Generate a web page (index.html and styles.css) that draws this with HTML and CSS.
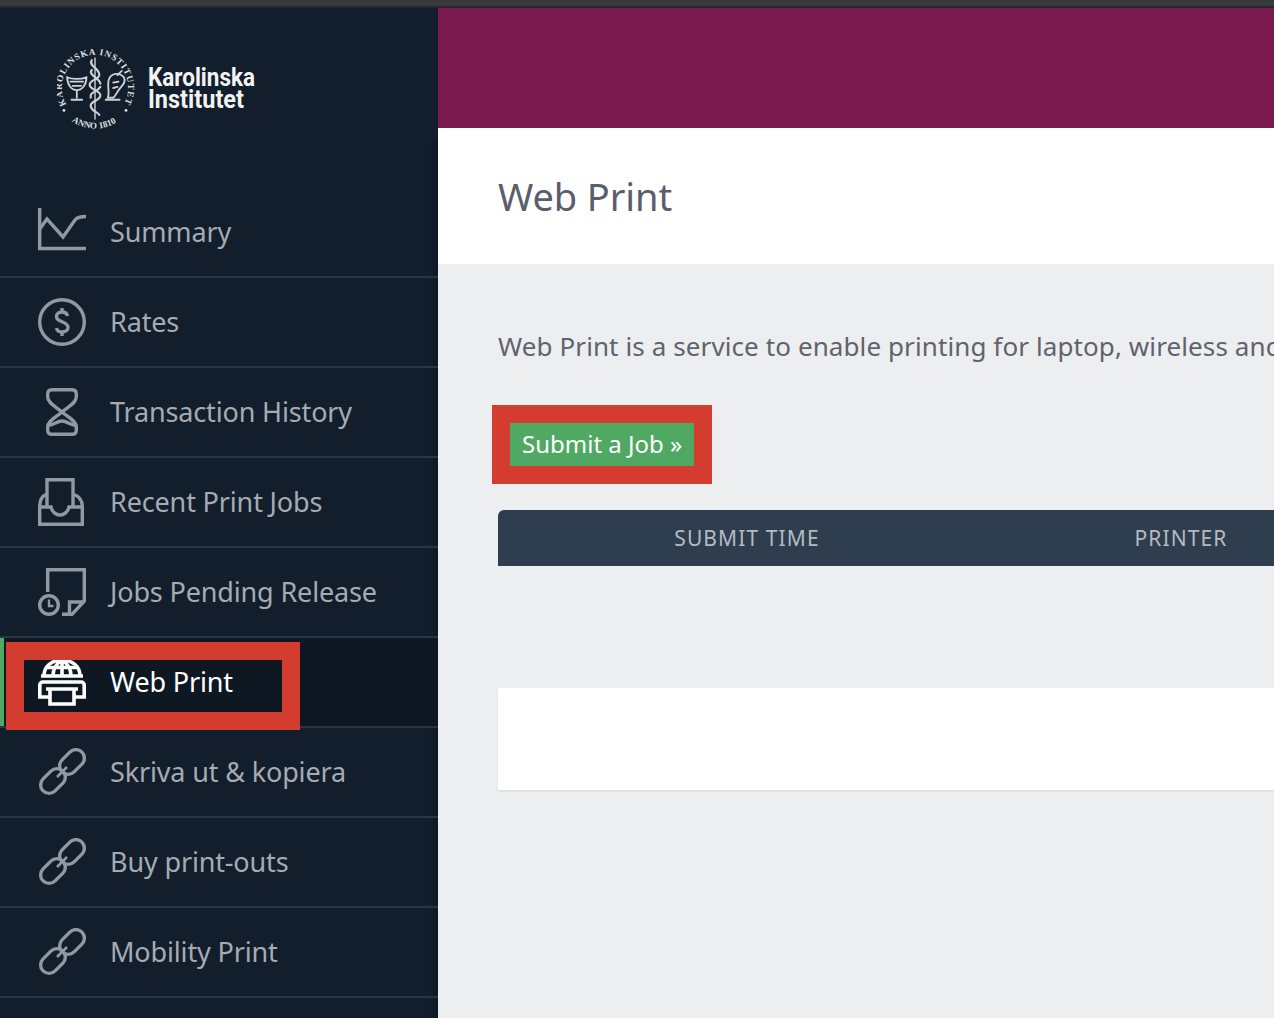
FILE: index.html
```html
<!DOCTYPE html>
<html lang="en">
<head>
    <meta charset="UTF-8">
    <title>Web Print</title>
    <link rel="stylesheet" href="styles.css">
</head>
<body>
    <svg class="defs" width="0" height="0">
        <symbol id="icon-link" viewBox="0 0 48 48">
            <g fill="none" stroke="currentColor" stroke-width="3.400">
                <rect x="20" y="5.500" width="28" height="17" rx="8.500" transform="rotate(-45 34 14)"/>
                <rect x="1" y="24.500" width="28" height="17" rx="8.500" transform="rotate(-45 15 33)"/>
                <path d="M19 29 L29 19" stroke-width="2.600"/>
            </g>
        </symbol>
    </svg>

    <div class="topbar"></div>

    <div class="app">
        <aside class="sidebar">
            <div class="logo">
                <svg width="210" height="90" viewBox="0 0 210 90">
                    <defs>
                        <path id="seal-top" d="M11.200 56.500 A31 31 0 1 1 64.800 56.500"/>
                        <path id="seal-bottom" d="M16.200 72.100 A38 38 0 0 0 59.800 72.100"/>
                    </defs>
                    <g transform="translate(38 41) scale(1.070) translate(-38 -41)">
                        <text class="seal-text"><textPath href="#seal-top" textLength="128">KAROLINSKA INSTITUTET</textPath></text>
                        <text class="seal-text"><textPath href="#seal-bottom" textLength="44">ANNO 1810</textPath></text>
                        <g fill="none" stroke="#cfd2d5" stroke-width="1.700" stroke-linecap="round">
                            <path d="M38 13 V70" stroke-width="1.300"/>
                            <path d="M35 15 C31 20 43 23 42 29 C41 34 33 33 33 38 C33 43 43 43 43 48 C43 53 33 53 34 58 C35 63 40 63 42 66" stroke-width="2"/>
                            <path d="M35 24 C31 29 43 32 43 37 M43 40 C39 46 33 44 34 50" stroke-width="2"/>
                            <path d="M12 31 C16 33 25 33 30 31 C30 38 26 43 21 43 C16 43 12 38 12 31 Z M21 43 V50 M16 52 H26"/>
                            <path d="M15 35 H27 M17 39 H25"/>
                            <path d="M50 50 C52 45 49 38 51 33 C53 27 61 26 65 31 C68 36 62 40 60 43 C58 46 57 49 55 50 Z M48 52 H61"/>
                            <path d="M59 29 L63 25 M55 36 L60 35 M55 41 L59 40"/>
                        </g>
                        <circle cx="9" cy="62" r="1.300" fill="#dfe1e3"/>
                        <circle cx="67" cy="62" r="1.300" fill="#dfe1e3"/>
                    </g>
                    <text class="logo-text" x="91" y="39" textLength="107" lengthAdjust="spacingAndGlyphs">Karolinska</text>
                    <text class="logo-text" x="91" y="61" textLength="96" lengthAdjust="spacingAndGlyphs">Institutet</text>
                </svg>
            </div>

            <nav class="menu">
                <a class="menu-item">
                    <svg class="icon" viewBox="0 0 48 48" fill="none" stroke="currentColor" stroke-width="3.400">
                        <path d="M1.700 0 V40.500 H48"/>
                        <path d="M1.700 21 L9 11 L25 29 L37 12 C39 9.500 43 8.500 48 8.500"/>
                    </svg>
                    <span>Summary</span>
                </a>
                <a class="menu-item">
                    <svg class="icon" viewBox="0 0 48 48" fill="none" stroke="currentColor" stroke-width="3.400">
                        <circle cx="24" cy="24" r="22.300"/>
                        <path d="M29.500 18 C29 15.500 26.500 14 24 14 C20.500 14 18.500 16 18.500 18.500 C18.500 25 30 22.500 30 29.500 C30 32 27.500 34 24 34 C21 34 19 32.500 18.500 30"/>
                        <path d="M24 10 V14 M24 34 V38"/>
                    </svg>
                    <span>Rates</span>
                </a>
                <a class="menu-item">
                    <svg class="icon" viewBox="0 0 48 48" fill="none" stroke="currentColor" stroke-width="3.400" stroke-linejoin="round">
                        <path d="M14 1.700 H34 C37.500 1.700 38.300 4 38.300 6 V9 C38.300 15 31 18 24 24 C17 30 9.700 33 9.700 39 V42 C9.700 44 10.500 46.300 14 46.300 H34 C37.500 46.300 38.300 44 38.300 42 V39 C38.300 33 31 30 24 24 C17 18 9.700 15 9.700 9 V6 C9.700 4 10.500 1.700 14 1.700 Z"/>
                        <path d="M9.700 37.500 C15 37.500 19 33 24 33 C29 33 33 37.500 38.300 37.500"/>
                    </svg>
                    <span>Transaction History</span>
                </a>
                <a class="menu-item">
                    <svg class="icon" viewBox="0 0 48 48" fill="none" stroke="currentColor" stroke-width="3.400">
                        <path d="M9 28 V1.700 H35 V28"/>
                        <path d="M9 16 C4 18 1.700 23 1.700 28 V46.300 H44.300 V28 C44.300 23 41 18 35 16"/>
                        <path d="M1.700 29 H13 C14 34 18 37 22 37 C26 37 30 34 31 29 H44.300"/>
                    </svg>
                    <span>Recent Print Jobs</span>
                </a>
                <a class="menu-item">
                    <svg class="icon" viewBox="0 0 48 48" fill="none" stroke="currentColor" stroke-width="3.400">
                        <path d="M9.700 24 V1.700 H46.300 V33 L34 46.300 H24"/>
                        <path d="M46.300 34 H31.500 V46"/>
                        <circle cx="11" cy="37" r="9.300"/>
                        <path d="M11 31.500 V38 H15.500" stroke-width="2.400"/>
                    </svg>
                    <span>Jobs Pending Release</span>
                </a>
                <a class="menu-item active">
                    <svg class="icon" viewBox="0 0 48 48" fill="none" stroke="currentColor" stroke-width="3.600">
                        <path d="M6 18 C6 8 14 2 24 2 C34 2 42 8 42 18"/>
                        <path d="M24 2 V18 M15 18 C15 11 19 5 24 2 C29 5 33 11 33 18 M9 9.500 H39 M3 18 H45"/>
                        <path d="M11 39 H1.800 V27 C1.800 25.500 3 24 5 24 H43 C45 24 46.200 25.500 46.200 27 V39 H37"/>
                        <path d="M8 31 H40 M12 31 V46 H36 V31"/>
                    </svg>
                    <span>Web Print</span>
                </a>
                <a class="menu-item">
                    <svg class="icon"><use href="#icon-link"/></svg>
                    <span>Skriva ut &amp; kopiera</span>
                </a>
                <a class="menu-item">
                    <svg class="icon"><use href="#icon-link"/></svg>
                    <span>Buy print-outs</span>
                </a>
                <a class="menu-item">
                    <svg class="icon"><use href="#icon-link"/></svg>
                    <span>Mobility Print</span>
                </a>
            </nav>
            <div class="callout callout-menu"></div>
        </aside>

        <main class="main">
            <div class="banner"></div>
            <header class="page-title">
                <h1>Web Print</h1>
            </header>
            <section class="content">
                <p class="intro">Web Print is a service to enable printing for laptop, wireless and unauthenticated desktop users without the need to install print drivers.</p>
                <div class="actions">
                    <a class="btn-submit">Submit a Job »</a>
                </div>
                <div class="job-head">
                    <div>SUBMIT TIME</div>
                    <div>PRINTER</div>
                </div>
                <div class="job-empty"></div>
            </section>
        </main>
    </div>
</body>
</html>
```

FILE: styles.css
```css
html, body {
    margin: 0;
    padding: 0;
    height: 100%;
    overflow: hidden;
}
body {
    font-family: 'Noto Sans', Arial, sans-serif;
    background-color: #edeef0;
}
.defs {
    display: block;
    height: 0;
}
.topbar {
    box-sizing: border-box;
    height: 8px;
    background-color: #3a3a3c;
    border-bottom: 2px solid #26272a;
}
.app {
    display: flex;
    height: 1010px;
}
.sidebar {
    position: relative;
    flex: 0 0 438px;
    background: linear-gradient(to left, rgba(0, 0, 0, 0.16), transparent) no-repeat 100% 130px / 10px 100%, #121e2b;
}
.logo {
    height: 180px;
    padding: 39px 0 0 57px;
    box-sizing: border-box;
}
.logo svg {
    display: block;
}
.seal-text {
    font-family: 'Liberation Serif', serif;
    font-size: 8.500px;
    font-weight: 700;
    fill: #dfe1e3;
}
.logo-text {
    font-family: 'Liberation Sans Narrow', 'Roboto', Arial, sans-serif;
    font-size: 26px;
    font-weight: 700;
    fill: #f2f3f4;
}
.menu-item {
    display: flex;
    align-items: center;
    gap: 24px;
    height: 88px;
    padding-left: 38px;
    border-bottom: 2px solid #2a3644;
    color: #a6abb2;
    font-size: 27px;
    letter-spacing: -0.15px;
}
.menu-item span {
    margin-bottom: 2px;
}
.menu-item .icon {
    color: #9298a0;
}
.menu-item.active {
    background-color: #0e1822;
    box-shadow: inset 4px 0 0 #4fa963;
    color: #fff;
}
.menu-item.active .icon {
    color: #fff;
}
.icon {
    flex: 0 0 48px;
    width: 48px;
    height: 48px;
}
.callout {
    position: absolute;
    box-sizing: border-box;
    border: 18px solid #d33c2f;
}
.callout-menu {
    left: 6px;
    top: 634px;
    width: 294px;
    height: 88px;
}
.main {
    flex: 1;
    min-width: 0;
    overflow: hidden;
}
.banner {
    height: 120px;
    background-color: #7b1a4f;
}
.page-title {
    display: flex;
    align-items: center;
    height: 136px;
    padding-left: 60px;
    background-color: #fff;
}
.page-title h1 {
    margin: 0;
    font-size: 38px;
    font-weight: 400;
    letter-spacing: -0.1px;
    color: #5a5e6b;
}
.content {
    padding: 64px 0 0 60px;
}
.intro {
    margin: 0;
    font-size: 26px;
    line-height: 36px;
    letter-spacing: 0.1px;
    color: #5f636e;
    white-space: nowrap;
}
.actions {
    display: inline-block;
    margin: 41px 0 26px -6px;
    border: 18px solid #d33c2f;
}
.btn-submit {
    display: block;
    padding: 0 12px 2px;
    line-height: 41px;
    background-color: #4fa963;
    color: #fff;
    font-size: 24px;
}
.job-head {
    display: grid;
    grid-template-columns: 498px 370px;
    width: 900px;
    height: 56px;
    align-items: center;
    text-align: center;
    background-color: #2e3e4f;
    border-radius: 6px 0 0 0;
    color: #b4bac3;
    font-size: 21px;
    letter-spacing: 1.100px;
}
.job-empty {
    width: 900px;
    height: 102px;
    margin-top: 122px;
    background-color: #fff;
    box-shadow: 0 1px 2px rgba(0, 0, 0, 0.1);
}
```
